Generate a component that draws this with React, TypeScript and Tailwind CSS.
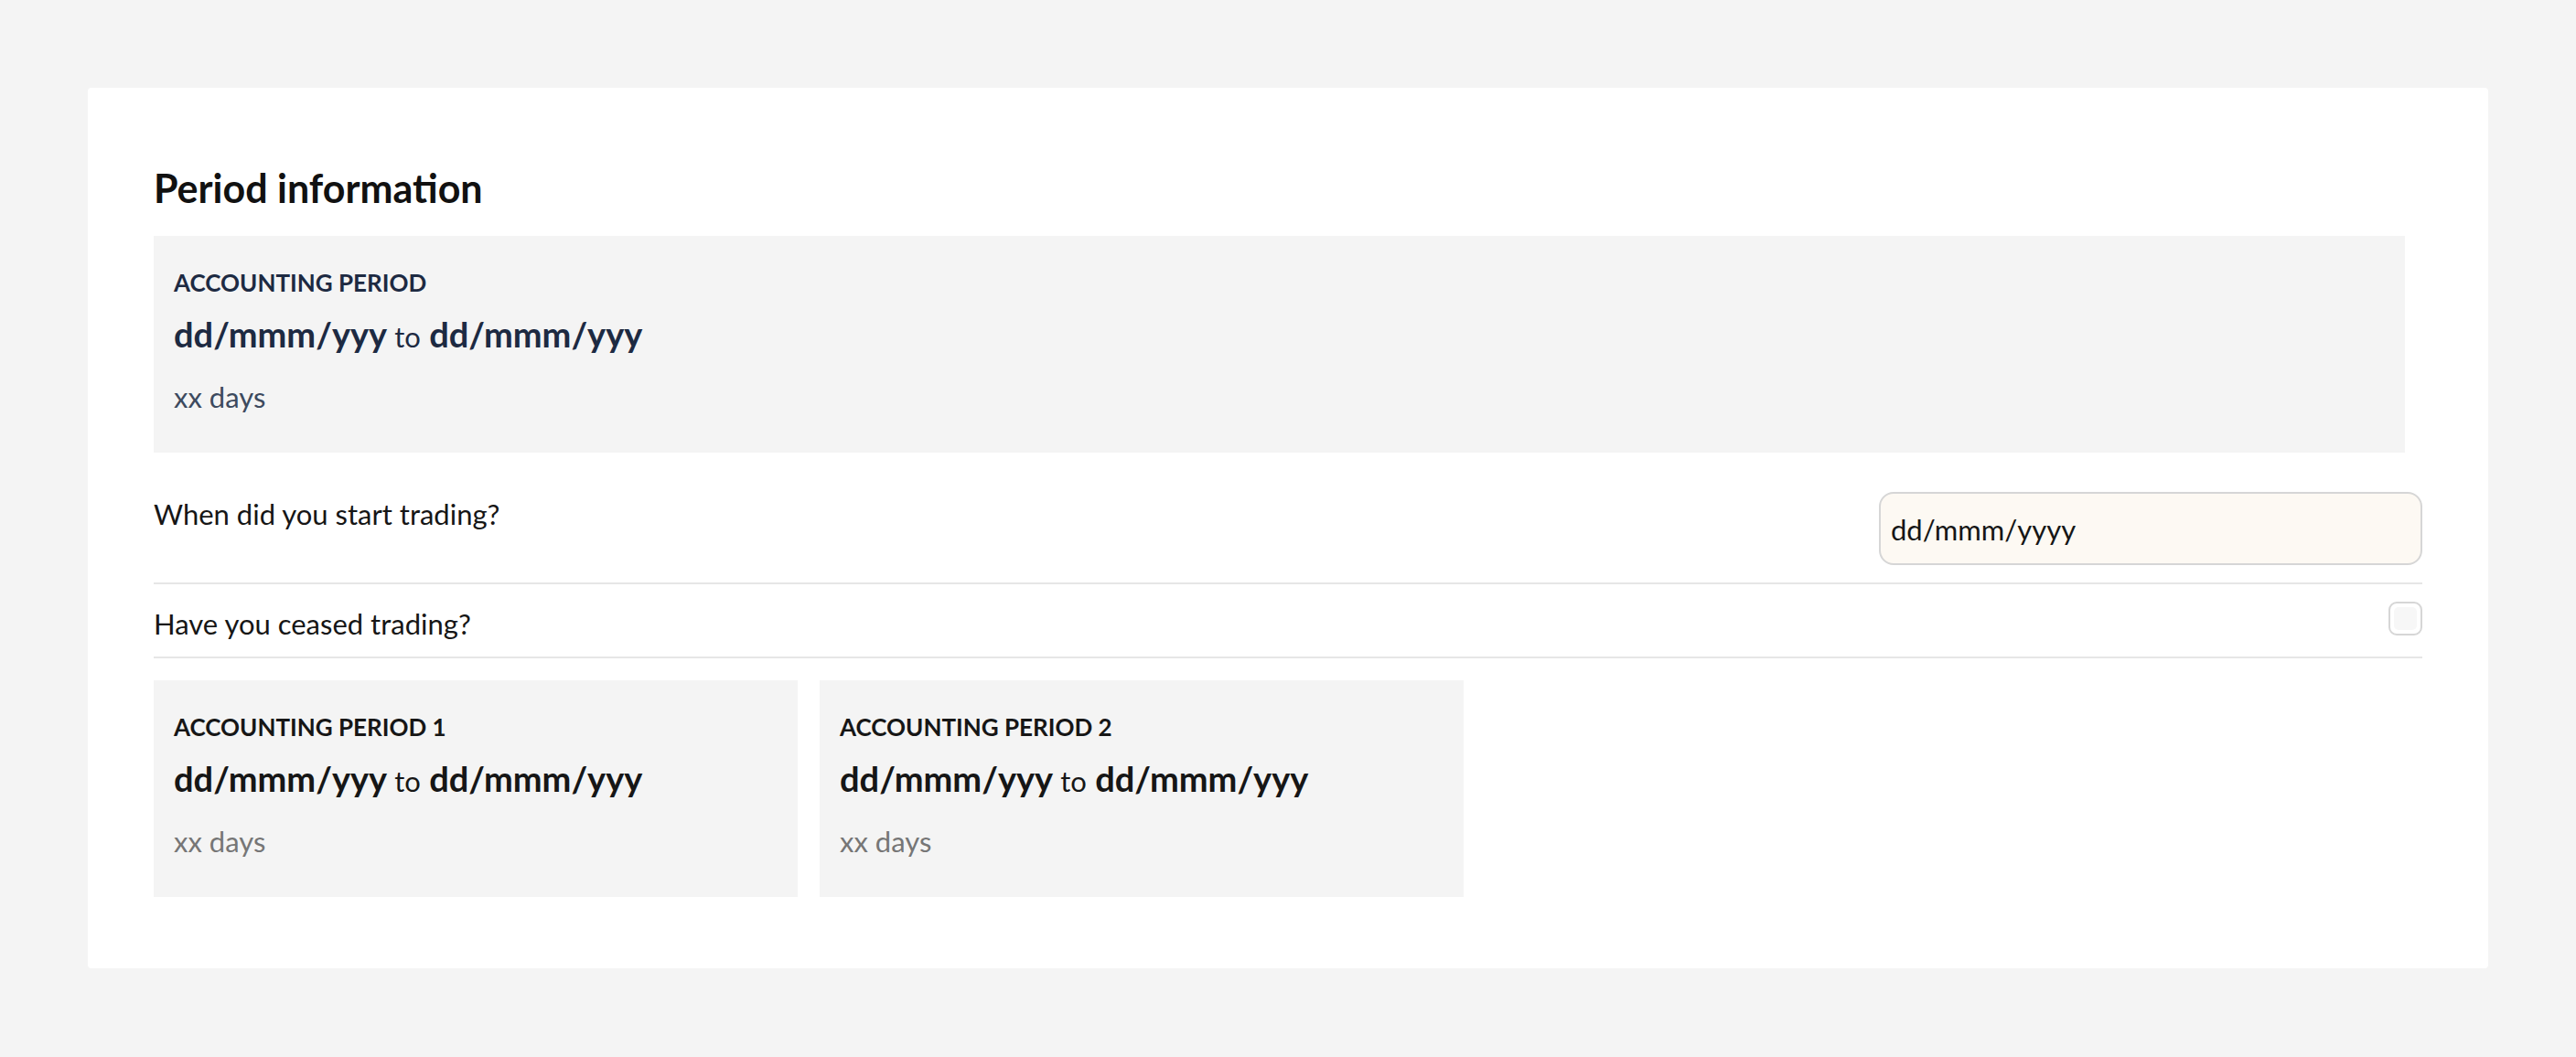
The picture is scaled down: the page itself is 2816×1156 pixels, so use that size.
import React from "react";

function PeriodBox({
  label,
  tone,
}: {
  label: string;
  tone: "navy" | "dark";
}) {
  const main = tone === "navy" ? "text-[#1d2a42]" : "text-[#161616]";
  const sub = tone === "navy" ? "text-[#3d4a5e]" : "text-[#767676]";
  return (
    <div className="h-[237px] bg-[#f4f4f4] px-[22px] pt-[32px]">
      <div className={`text-[26px] leading-[39px] font-bold uppercase ${main}`}>{label}</div>
      <div className={`mt-[9px] text-[38px] leading-[54px] font-bold ${main}`}>
        dd/mmm/yyy <span className="text-[31px] font-normal">to</span> dd/mmm/yyy
      </div>
      <div className={`mt-[17px] text-[31px] leading-[45px] ${sub}`}>xx days</div>
    </div>
  );
}

export default function App() {
  return (
    <div
      className="min-h-screen bg-[#f4f4f4] px-[96px] pt-[96px] pb-[97px]"
      style={{ fontFamily: "Lato, 'Open Sans', sans-serif" }}
    >
      <div className="rounded-[4px] bg-white px-[72px] pt-[85px] pb-[78px]">
        <h2 className="text-[43px] leading-[50px] font-bold text-[#111111]">Period information</h2>
        <div className="mt-[27px] mr-[19px]">
          <PeriodBox label="Accounting period" tone="navy" />
        </div>

        <div className="mt-[24px] flex items-start justify-between border-b-2 border-[#e6e6e6] pt-[19px] pb-[19px]">
          <span className="mt-[2px] text-[31px] leading-[45px] text-[#161616]">When did you start trading?</span>
          <div className="flex h-[80px] w-[594px] items-center rounded-[16px] border-2 border-[#d6d6d6] bg-[#fdf9f3] px-[11px] pt-[2px] text-[31px] text-[#161616]">
            dd/mmm/yyyy
          </div>
        </div>

        <div className="flex items-start justify-between border-b-2 border-[#e6e6e6] pt-[19px] pb-[13px]">
          <span className="mt-[2px] text-[31px] leading-[45px] text-[#161616]">Have you ceased trading?</span>
          <div className="h-[37px] w-[37px] rounded-[9px] border-2 border-[#d6d6d6] bg-white p-[4px]">
            <div className="h-full w-full rounded-[5px] bg-[#f7f7f7]" />
          </div>
        </div>

        <div className="mt-[24px] flex gap-[24px]">
          <div className="w-[704px]">
            <PeriodBox label="Accounting period 1" tone="dark" />
          </div>
          <div className="w-[704px]">
            <PeriodBox label="Accounting period 2" tone="dark" />
          </div>
        </div>
      </div>
    </div>
  );
}
